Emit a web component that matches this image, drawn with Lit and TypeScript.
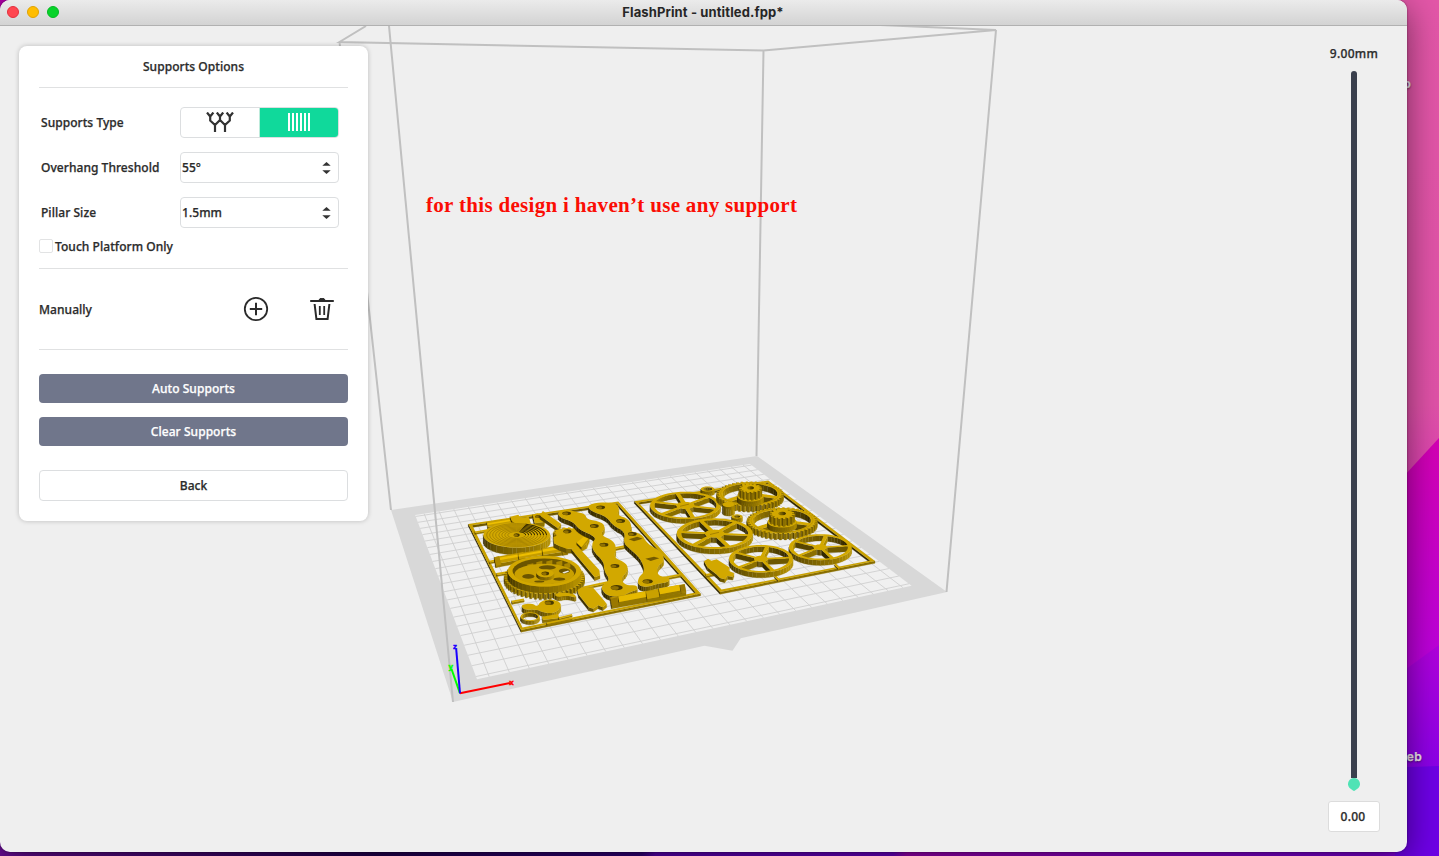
import { LitElement, html, svg, css } from "lit";
import { customElement, property } from "lit/decorators.js";

type Pt = [number, number];

/* ---------- shading and extrusion helpers ---------- */

const TOP = "#d2a800";
const tone = (k: number) =>
  `rgb(${Math.round(212 * k)},${Math.round(170 * k)},0)`;
const path = (pts: Pt[]) =>
  "M" + pts.map(([x, y]) => `${x.toFixed(1)} ${y.toFixed(1)}`).join("L") + "Z";

const area = (pts: Pt[]) =>
  pts.reduce((s, [x, y], i) => {
    const [a, b] = pts[(i + 1) % pts.length];
    return s + x * b - a * y;
  }, 0);

/** Reads "x,y x,y" pairs given on a 3x sheet whose origin is (ox, oy). */
const sheet = (ox: number, oy: number) => (s: string): Pt[] =>
  s.trim().split(/\s+/).map((p) => {
    const [x, y] = p.split(",").map(Number);
    return [ox + x / 3, oy + y / 3] as Pt;
  });
const A = sheet(400, 500);
const B = sheet(580, 490);
const C = sheet(620, 450);

const ellipse = (cx: number, cy: number, rx: number, ry: number, n = 40): Pt[] =>
  Array.from({ length: n }, (_, i) => {
    const t = (i / n) * Math.PI * 2;
    return [cx + rx * Math.cos(t), cy + ry * Math.sin(t)] as Pt;
  });

const gearRim = (cx: number, cy: number, rx: number, ry: number, teeth: number, depth: number): Pt[] => {
  const pts: Pt[] = [];
  for (let i = 0; i < teeth; i++) {
    [[0, 0], [0.12, 1], [0.5, 1], [0.62, 0]].forEach(([o, k]) => {
      const t = ((i + o) / teeth) * Math.PI * 2;
      const f = 1 - depth * (1 - k);
      pts.push([cx + rx * f * Math.cos(t), cy + ry * f * Math.sin(t)]);
    });
  }
  return pts;
};

const smooth = (pts: Pt[]): Pt[] => {
  let out = pts;
  for (let k = 0; k < 2; k++) {
    const next: Pt[] = [];
    out.forEach(([x, y], i) => {
      const [a, b] = out[(i + 1) % out.length];
      next.push([x * 0.75 + a * 0.25, y * 0.75 + b * 0.25], [x * 0.25 + a * 0.75, y * 0.25 + b * 0.75]);
    });
    out = next;
  }
  return out;
};

/** A flat slab of the given depth: visible walls first, then its top face. */
const slab = (outer: Pt[], holes: Pt[][], h: number, top = TOP, dim = 0) => {
  const walls: { d: string; f: string; y: number }[] = [];
  const add = (loop: Pt[], hole: boolean) => {
    const sign = (area(loop) > 0 ? 1 : -1) * (hole ? -1 : 1);
    loop.forEach(([x, y], i) => {
      const [a, b] = loop[(i + 1) % loop.length];
      let nx = (b - y) * sign * 0.42;
      const ny = -(a - x) * sign;
      if (ny <= 0.01) return;
      nx /= Math.hypot(nx, ny * 0.42) || 1;
      const k = Math.max(0.24, Math.min(0.84, (hole ? 0.5 : 0.62) - dim + nx * 0.42));
      walls.push({ d: path([[x, y], [a, b], [a, b + h], [x, y + h]]), f: tone(k), y: (y + b) / 2 });
    });
  };
  holes.forEach((l) => add(l, true));
  add(outer, false);
  walls.sort((p, q) => p.y - q.y);
  return svg`${walls.map((w) => svg`<path d=${w.d} fill=${w.f} stroke=${w.f} stroke-width=".3"/>`)}
    <path d=${path(outer) + holes.map(path).join("")} fill=${top} fill-rule="evenodd"/>`;
};

/* ---------- printed parts ---------- */

const wheel = (cx: number, cy: number, rx: number, ry: number, h: number, spokes: number, phase: number, hub = 0.26) => {
  const q = 0.88;
  const holes: Pt[][] = [];
  const gap = 0.1;
  for (let i = 0; i < spokes; i++) {
    const a0 = phase + (i / spokes) * Math.PI * 2;
    const a1 = phase + ((i + 1) / spokes) * Math.PI * 2;
    const pts: Pt[] = [];
    for (let j = 0; j <= 8; j++) {
      const t = a0 + gap * 0.7 + ((a1 - a0 - gap * 1.4) * j) / 8;
      pts.push([cx + rx * q * Math.cos(t), cy + ry * q * Math.sin(t)]);
    }
    for (let j = 4; j >= 0; j--) {
      const t = a0 + gap * 2.4 + ((a1 - a0 - gap * 4.8) * j) / 4;
      pts.push([cx + rx * hub * Math.cos(t), cy + ry * hub * Math.sin(t)]);
    }
    holes.push(pts);
  }
  return slab(ellipse(cx, cy, rx, ry, 48), holes, h);
};

const gearWheel = (cx: number, cy: number, rx: number, ry: number, hx: number, hy: number, hr: number) => {
  const holes: Pt[][] = [];
  for (let i = 0; i < 3; i++) {
    const a0 = 0.35 + (i / 3) * Math.PI * 2;
    const pts: Pt[] = [];
    for (let j = 0; j <= 10; j++) {
      const t = a0 + 0.12 + (1.85 * j) / 10;
      pts.push([cx + rx * 0.82 * Math.cos(t), cy + ry * 0.82 * Math.sin(t)]);
    }
    for (let j = 5; j >= 0; j--) {
      const t = a0 + 0.3 + (1.5 * j) / 5;
      pts.push([cx + rx * 0.36 * Math.cos(t), cy + ry * 0.36 * Math.sin(t)]);
    }
    holes.push(pts);
  }
  return svg`${slab(gearRim(cx, cy, rx, ry, 44, 0.07), holes, 6)}
    <path d=${path(ellipse(cx, cy - 0.3, rx * 0.88, ry * 0.88))} fill="none" stroke="#b08b00" stroke-width=".6"/>
    ${slab(ellipse(hx, hy + 8, hr * 1.15, hr * 0.46), [], 5)}
    ${slab(gearRim(hx, hy, hr, hr * 0.42, 15, 0.2), [ellipse(hx, hy - 0.3, hr * 0.32, hr * 0.15, 14)], 7.5)}`;
};

const bar = (a: Pt, b: Pt, w: number, h: number, top = TOP) => {
  const dx = b[0] - a[0], dy = b[1] - a[1], l = Math.hypot(dx, dy);
  const ox = (-dy / l) * w / 2, oy = (dx / l) * w / 2;
  return slab([[a[0] + ox, a[1] + oy], [b[0] + ox, b[1] + oy], [b[0] - ox, b[1] - oy], [a[0] - ox, a[1] - oy]], [], h, top);
};

const rod = (pts: string) => {
  const [a, b, t] = A(pts);
  const w = t[1] - 500;
  const off = (k: number): Pt[] => [[a[0], a[1] + k], [b[0], b[1] + k]];
  return svg`${bar(a, b, w, w * 0.5, "#c49c00")}
    <path d=${"M" + off(-w * 0.12).map((p) => p.join(" ")).join("L")} stroke="#eebf00" stroke-width=${w * 0.36}/>`;
};

const frame = (outer: Pt[], inner: Pt[]) => slab(outer, [inner], 2.2, "#c9a100", 0.05);
const hole = (p: Pt, rx = 4.4, ry = 1.9) => svg`
  <ellipse cx=${p[0]} cy=${p[1]} rx=${rx} ry=${ry} fill="#4a3a00"/>
  <ellipse cx=${p[0] - rx * 0.3} cy=${p[1] + 0.3} rx=${rx * 0.65} ry=${ry * 0.75} fill="#8f7000"/>`;

const leftTray = () => {
  const [sc] = A("350,105");
  const [gc] = A("433,222");
  return svg`
    ${frame(
      [[468.3, 524], [618.3, 501.4], [700.7, 593.5], [521, 630]],
      [[472.2, 525.2], [616.8, 503.4], [695.6, 592.4], [522.5, 627.4]]
    )}
    ${bar(A("225,97")[0], A("262,90")[0], 1.6, 1.4)}
    ${bar(A("268,185")[0], A("300,178")[0], 1.8, 1.6)}
    ${bar(A("290,222")[0], A("330,215")[0], 1.8, 1.6)}
    ${bar(A("335,305")[0], A("372,298")[0], 2, 1.8)}
    ${bar(A("640,145")[0], A("685,136")[0], 2, 1.8)}
    ${bar(A("550,262")[0], A("640,243")[0], 1.8, 1.6)}
    ${bar(A("740,243")[0], A("842,224")[0], 1.8, 1.6)}
    ${rod("262,74 345,60 0,14")}
    ${slab(A("330,50 355,44 362,54 386,50 392,70 360,78 336,64"), [], 2.4)}
    ${slab(A("398,44 412,40 436,48 432,66 404,70"), [], 4.5)}
    ${bar(A("424,40")[0], A("478,78")[0], 5.5, 3.6)}
    ${hole(A("414,50")[0], 3, 1.4)}

    ${slab(ellipse(sc[0], sc[1], 33.4, 12.6, 48), [], 7.4)}
    ${[30, 27, 24, 21, 18, 15, 12, 9].map((r) => svg`
      <ellipse cx=${sc[0]} cy=${sc[1]} rx=${r} ry=${r * 0.38} fill="none" stroke="#9a7800" stroke-width=".7"/>
      <path d=${`M${sc[0] + r * 0.3} ${sc[1] - r * 0.36}A${r} ${r * 0.38} 0 0 1 ${sc[0] + r} ${sc[1]}`} fill="none" stroke="#3a2e00" stroke-width="1"/>`)}
    ${hole(sc, 3, 1.8)}

    ${rod("285,182 372,166 0,21")}
    ${rod("356,169 430,156 0,17")}
    ${rod("428,155 502,143 0,21")}
    ${slab(A("283,172 298,168 304,194 288,198"), [], 1.6, "#b08b00")}
    ${slab(A("484,141 498,138 502,158 488,161"), [], 1.6, "#b08b00")}

    ${slab(gearRim(gc[0], gc[1] + 2.6, 40.2, 17.6, 50, 0.08), [], 5.6)}
    ${slab(ellipse(gc[0], gc[1] - 2.8, 36.6, 15.4, 48), [], 6.5)}
    <ellipse cx=${gc[0]} cy=${gc[1] - 3} rx="31.8" ry="12.6" fill="#6b5400"/>
    ${[[-25, -5.4], [-17, -9.4], [-8, -11.8], [2, -12.6], [12, -12], [20, -10]].map(([x, y]) => svg`
      <path d=${`M${gc[0] + x} ${gc[1] + y}l6 -1.4v5l-6 1.4z`} fill="#ab8700"/>`)}
    <ellipse cx=${gc[0]} cy=${gc[1]} rx="29.8" ry="10.2" fill="#c9a000"/>
    ${[[-16, 2.4, 6, 2.3], [3, -6.6, 8.5, 2.1], [20, -3, 5.5, 2.4], [15, 5.2, 6, 1.6], [-5, 7.6, 5, 1]].map(([x, y, a, b]) => svg`
      <ellipse cx=${gc[0] + x} cy=${gc[1] + y} rx=${a} ry=${b} fill="#6b5400"/>`)}
    <path d=${`M${gc[0] + 18} ${gc[1] - 1.8}l6 -1.6l.6 1.2l-5 1.6z`} fill="#e8e6de"/>
    ${slab(ellipse(gc[0] + 1, gc[1] - 0.6, 8.5, 3.8), [], 3)}
    ${hole([gc[0] + 1, gc[1] - 0.6], 3.8, 1.9)}

    ${slab(gearRim(...A("503,98")[0], 14.5, 5.4, 16, 0.14), [], 5)}
    ${slab(A("460,112 486,100 540,98 556,106 568,112 560,132 540,144 522,146 500,146 478,138 462,130"), [], 4.5)}
    ${slab(A("514,148 534,140 598,210 600,226 584,232"), [], 3.4)}
    ${slab(A("530,128 558,104 568,112 544,142"), [], 2.2, "#e8bb00")}
    ${hole(A("502,94")[0], 4, 2)}

    ${slab(smooth(A("472,36 500,28 530,36 556,42 560,58 606,66 616,84 600,104 640,122 650,146 640,172 680,190 684,212 662,236 676,256 712,256 712,270 690,276 664,290 622,288 604,268 608,254 630,240 612,212 612,186 578,152 576,128 590,112 536,88 520,66 478,52")), [], 4.6, TOP, 0.14)}
    ${hole(A("500,40")[0])}${hole(A("583,78")[0])}${hole(A("612,134")[0])}${hole(A("645,198")[0])}${hole(A("650,263")[0], 6, 2.6)}

    ${slab(smooth(B("22,46 58,36 112,40 118,60 110,74 148,88 156,116 146,122 186,132 200,160 246,186 254,212 230,232 234,258 268,262 268,276 230,282 200,292 174,286 174,264 196,242 180,204 150,178 130,158 136,126 98,106 80,80 30,62")), [], 4.6, TOP, 0.14)}
    ${hole(B("62,52")[0])}${hole(B("122,93")[0])}${hole(B("157,132")[0])}${hole(B("203,274")[0], 5, 2.2)}
    <path d=${path(B("146,148 172,140 188,146 162,154"))} fill="#755b00"/>
    <path d=${path(B("196,206 222,200 238,205 212,213"))} fill="#755b00"/>

    ${bar(B("92,334")[0], B("316,294")[0], 8, 3.5, "#b89200")}
    ${bar(B("116,328")[0], B("200,312")[0], 5.5, 3.5, "#e6b900")}
    ${bar(B("200,316")[0], B("256,306")[0], 7.5, 3, "#caa100")}
    ${bar(B("238,304")[0], B("300,293")[0], 6, 3, "#e6b900")}
    ${slab(B("92,326 112,322 116,346 96,350"), [], 1.5, "#9a7800")}
    ${slab(B("300,286 314,283 318,302 304,306"), [], 1.5, "#9a7800")}

    ${slab(A("532,270 546,262 578,262 614,304 620,312 608,322 594,316 580,326 566,322 536,284"), [], 3.4)}
    ${slab(smooth(A("462,284 482,276 524,282 530,294 500,286 474,292")), [], 4)}
    ${slab(smooth(A("362,314 396,310 412,320 422,304 450,296 482,306 482,324 462,340 430,338 410,328 372,330")), [], 4.5)}
    ${hole(A("448,308")[0], 4.6, 2.2)}
    ${slab(ellipse(...A("390,350")[0], 9.4, 4.4), [ellipse(...A("390,350")[0], 8, 3.6, 24)], 3.6)}
    ${slab(A("426,350 474,342 478,354 428,360"), [], 3)}
    ${bar(A("476,354")[0], A("516,344")[0], 1.6, 1.6)}
    ${bar(A("440,370")[0], A("516,354")[0], 1.6, 1.4)}`;
};

const rightTray = () => svg`
  ${frame(
    [[634.3, 501.2], [768.3, 480.4], [875, 561], [720, 592]],
    [[638.2, 502.4], [767.4, 482.4], [870, 560.4], [721.5, 589.6]]
  )}
  ${bar([706, 575], [714, 573.4], 1.8, 1.6)}
  ${bar([775, 576], [779, 580], 2, 1.2)}
  ${bar([835, 564], [839, 568], 2, 1.2)}
  ${slab(ellipse(707.6, 489, 6.8, 2.6, 20), [ellipse(707.6, 489, 4.6, 1.7, 16)], 4.5)}
  ${wheel(685.3, 505.4, 35.3, 13.7, 4.6, 6, 0.28)}
  ${gearWheel(750, 493.8, 33.4, 12.4, 750.4, 488.2, 11.4)}
  ${slab(ellipse(728.5, 504.5, 6, 2.6, 20), [], 9)}
  ${slab(ellipse(737, 516.5, 5.4, 2.2, 20), [ellipse(737, 516.5, 3.2, 1.2, 14)], 4.5)}
  ${gearWheel(782, 520.6, 35.2, 13.4, 782, 513.8, 12.6)}
  ${wheel(714.7, 533.6, 38, 15.3, 5.2, 6, 0.12)}
  ${wheel(820.3, 547.2, 31.4, 13, 5.2, 5, -0.12, 0.22)}
  ${wheel(761, 558.8, 32, 13.8, 5.2, 5, -0.1, 0.22)}
  <path d="M680 506.3l9 -2.2M710 534.5l9 -2.2" stroke="#a07d00" stroke-width=".9"/>
  ${slab(C("252,334 264,326 274,332 290,328 328,352 326,362 342,370 338,380 322,378 314,388 300,384 288,372 262,352"), [], 3.4)}`;

/* ---------- build plate ---------- */

const FL: Pt = [477, 679.3], FR: Pt = [911.6, 585.7], BL: Pt = [415.1, 515], BR: Pt = [750, 464];
const COLS = 25.2, ROWS = 20.5;

const project = (u: number, v: number): Pt => {
  const g = 0.1874, h = 0.3881;
  const a = FR[0] - FL[0] + g * FR[0], b = BL[0] - FL[0] + h * BL[0];
  const d = FR[1] - FL[1] + g * FR[1], e = BL[1] - FL[1] + h * BL[1];
  const w = 1 + g * u + h * v;
  return [(a * u + b * v + FL[0]) / w, (d * u + e * v + FL[1]) / w];
};

const gridPath = () => {
  let d = "";
  for (let i = 0.6; i < COLS; i++) d += `M${project(i / COLS, 0).join(" ")}L${project(i / COLS, 1).join(" ")}`;
  for (let j = 0.25; j < ROWS; j++) d += `M${project(0, j / ROWS).join(" ")}L${project(1, j / ROWS).join(" ")}`;
  return d;
};

@customElement("build-scene")
export class BuildScene extends LitElement {
  static styles = css`
    :host { display: block; overflow: hidden; }
    .stage { display: block; }
    .note { font: bold 21px "Liberation Serif", serif; fill: #fb0d04; }
    .axis { font: bold 8px "Liberation Sans", sans-serif; stroke-width: 0.5; }
  `;

  render() {
    return html`<svg class="stage" width="1407" height="826" viewBox="0 26 1407 826" fill="none">
      <path d="M391 510L757 456L947 592L740.7 638.3L732.5 650.7L704.5 645.7L453 702Z" fill="#d8d8d8"/>
      <path d=${path([FL, FR, BR, BL])} fill="#f0f0f0"/>
      <path d=${gridPath()} stroke="#cfcfcf" stroke-width=".9"/>
      <path d="M366 26L339.5 42L763.5 50.5L996 30L880 25M339.5 42L391 510M763.5 50.5L756.5 456M996 30L946.5 592" stroke="#c0c0c0" stroke-width="2"/>
      ${leftTray()}
      ${rightTray()}
      <path d="M389 26L453 702" stroke="#c0c0c0" stroke-width="2"/>
      <path d="M460 693.3L451.5 669" stroke="#0f0" stroke-width="2"/>
      <path d="M460 693.3L510 683" stroke="#f00" stroke-width="2"/>
      <path d="M460 693.3L456.2 649" stroke="#1a00ff" stroke-width="2"/>
      <text class="axis" x="509.3" y="684.8" fill="#f00" stroke="#f00">x</text>
      <text class="axis" x="453" y="648.6" fill="#1a00ff" stroke="#1a00ff">z</text>
      <text class="axis" x="448.4" y="669" fill="#0f0" stroke="#0f0">y</text>
      <text class="note" x="426" y="211.5" textLength="371">for this design i haven’t use any support</text>
    </svg>`;
  }
}

@customElement("spin-field")
export class SpinField extends LitElement {
  @property() value = "";
  static styles = css`
    :host {
      display: flex; align-items: center; justify-content: space-between;
      box-sizing: border-box; width: 159px; height: 31px; padding: 0 7px 0 1px;
      border: 1px solid #dcdee0; border-radius: 4px; background: #fff;
    }
  `;
  render() {
    return html`<span>${this.value}</span>
      <svg width="9" height="14" viewBox="0 0 9 14" fill="#333"><path d="M.3 4.8L4.5 1L8.7 4.8Z"/><path d="M.3 9.2L4.5 13L8.7 9.2Z"/></svg>`;
  }
}

@customElement("supports-panel")
export class SupportsPanel extends LitElement {
  static styles = css`
    :host {
      display: flex; flex-direction: column; box-sizing: border-box;
      width: 349px; height: 475px; padding: 0 20px;
      background: #fff; border-radius: 8px; box-shadow: 0 0 5px rgba(0, 0, 0, 0.22);
    }
    .title { height: 41px; line-height: 41px; text-align: center; }
    .rule { height: 1px; background: #e0e1e2; }
    .fields { display: flex; flex-direction: column; gap: 14px; padding: 19px 9px 0 2px; }
    .field { display: flex; align-items: center; justify-content: space-between; height: 31px; }
    .kinds { display: flex; box-sizing: border-box; width: 159px; height: 31px; border: 1px solid #dcdee0; border-radius: 4px; overflow: hidden; }
    .kind { box-sizing: border-box; width: 78px; padding: 0 1px 1px 0; display: flex; align-items: center; justify-content: center; }
    .kind.on { width: 79px; background: #10d99b; border-left: 1px solid #bdebdb; }
    .check { display: flex; align-items: center; gap: 2px; height: 14px; margin: 11px 0 15px; }
    .box { box-sizing: border-box; width: 14px; height: 14px; border: 1px solid #e2e3e4; border-radius: 2px; }
    .manual { display: flex; align-items: center; height: 80px; }
    .manual .label { flex: 1; }
    .tools { display: flex; align-items: center; gap: 41px; padding-right: 14px; }
    .button { display: flex; align-items: center; justify-content: center; height: 29px; border-radius: 4px; background: #70768b; color: #fff; }
    .auto { margin-top: 24px; }
    .clear { margin-top: 14px; }
    .back { box-sizing: border-box; height: 31px; margin-top: 24px; background: #fff; border: 1px solid #dcdee0; color: #2b2b2b; }
  `;
  render() {
    return html`
      <div class="title">Supports Options</div>
      <div class="rule"></div>
      <div class="fields">
        <div class="field">
          <span>Supports Type</span>
          <div class="kinds">
            <div class="kind">
              <svg width="28" height="20" viewBox="0 0 28 20" fill="none" stroke="#333" stroke-width="2.2">
                <path d="M1 .5L4.2 4.5L7.4 .5M4.2 4.5V8.5L9 13L14 8V4.5L10.8 .5M14 4.5L17.2 .5M14 8L19 13L23.8 8.5V4.5L20.6 .5M23.8 4.5L27 .5M9 13V20M19 13V20"/>
              </svg>
            </div>
            <div class="kind on">
              <svg width="22" height="18" viewBox="0 0 22 18" fill="#fff">
                ${[0, 4, 8, 12, 16, 20].map((x) => svg`<rect x=${x} y="0" width="2" height="18"/>`)}
              </svg>
            </div>
          </div>
        </div>
        <div class="field"><span>Overhang Threshold</span><spin-field value="55°"></spin-field></div>
        <div class="field"><span>Pillar Size</span><spin-field value="1.5mm"></spin-field></div>
      </div>
      <div class="check"><span class="box"></span><span>Touch Platform Only</span></div>
      <div class="rule"></div>
      <div class="manual">
        <span class="label">Manually</span>
        <div class="tools">
          <svg width="26" height="26" viewBox="0 0 26 26" fill="none" stroke="#2b2b2b" stroke-width="1.8">
            <circle cx="13" cy="13" r="11.2"/><path d="M13 6.8V19.2M6.8 13H19.2" stroke-width="2"/>
          </svg>
          <svg width="24" height="24" viewBox="0 0 24 24" fill="none" stroke="#2b2b2b" stroke-width="2">
            <path d="M.2 4H23.8"/><path d="M9 3L10 1.6H14L15 3Z" fill="#2b2b2b" stroke-width="1"/>
            <path d="M4.6 7L6.4 22H17.6L19.4 7"/><path d="M9.8 9V18M14.2 9V18" stroke-width="1.8"/>
          </svg>
        </div>
      </div>
      <div class="rule"></div>
      <div class="button auto">Auto Supports</div>
      <div class="button clear">Clear Supports</div>
      <div class="button back">Back</div>
    `;
  }
}

@customElement("layer-slider")
export class LayerSlider extends LitElement {
  static styles = css`
    :host { display: flex; flex-direction: column; align-items: center; width: 52px; letter-spacing: 0.3px; }
    .max { height: 20px; line-height: 20px; white-space: nowrap; }
    .track { display: flex; flex-direction: column; align-items: center; justify-content: flex-end; width: 6px; height: 720px; margin-top: 7px; }
    .line { flex: 1; width: 6px; border-radius: 3px 3px 0 0; background: #3a404d; }
    .knob { display: block; flex: none; }
    .value { box-sizing: border-box; width: 52px; height: 31px; line-height: 29px; margin-top: 10px; padding-right: 2px; text-align: center; background: #fff; border: 1px solid #dcdcdc; border-radius: 3px; }
  `;
  render() {
    return html`<div class="max">9.00mm</div>
      <div class="track"><div class="line"></div>
        <svg class="knob" width="12" height="13" viewBox="0 0 12 13" fill="#4fe3b5"><path d="M6 0a6 6 0 0 1 4.4 10L7 12.6Q6 13.3 5 12.6L1.6 10A6 6 0 0 1 6 0Z"/></svg>
      </div>
      <div class="value">0.00</div>`;
  }
}

@customElement("app-root")
export class AppRoot extends LitElement {
  static styles = css`
    :host {
      display: block; position: relative; width: 1439px; height: 856px; overflow: hidden;
      font: 500 12px "Noto Sans", sans-serif; letter-spacing: 0.05px; color: #2b2b2b;
      -webkit-text-stroke: 0.25px; background: #b000a8;
    }
    .wallpaper { position: absolute; inset: 0; }
    .shortcut { position: absolute; color: #f3e6f2; font: 600 12px Inter, sans-serif; letter-spacing: 0.3px; text-shadow: 0 1px 2px rgba(0, 0, 0, 0.6); }
    .first { right: 28px; top: 76px; }
    .second { right: 17px; top: 749px; }
    .window { position: relative; width: 1407px; height: 852px; border-radius: 10px; overflow: hidden; background: #efefef; }
    .shade { position: absolute; left: 0; top: 0; width: 1407px; height: 852px; border-radius: 10px; box-shadow: 0 8px 34px rgba(0, 0, 0, 0.5), 0 0 2px rgba(0, 0, 0, 0.5); }
    .bar { display: grid; grid-template-columns: 60px 1fr 66px; align-items: center; box-sizing: border-box; height: 26px; padding: 0 2px 2px 7px; border-bottom: 1px solid #b1b1b1; background: linear-gradient(#ebebeb, #d3d3d3); }
    .lights { display: flex; gap: 8px; }
    .light { box-sizing: border-box; width: 12px; height: 12px; border-radius: 50%; background: #ff4650; border: 1px solid #e2303d; }
    .light.min { background: #ffbd00; border-color: #e0a200; }
    .light.max { background: #07d32a; border-color: #05b822; }
    .caption { text-align: center; font: 700 13px Inter, sans-serif; letter-spacing: 0.12px; -webkit-text-stroke: 0; color: #262626; }
    .body { display: grid; grid-template-columns: 1fr auto; height: 826px; }
    .scene { grid-area: 1 / 1 / 2 / 3; -webkit-text-stroke: 0; }
    .panel { grid-area: 1 / 1; margin: 20px 0 0 19px; z-index: 1; }
    .slider { grid-area: 1 / 2; margin: 18px 27px 0 0; z-index: 1; }
  `;
  render() {
    return html`
      <svg class="wallpaper" width="1439" height="856" viewBox="0 0 1439 856">
        <defs>
          <linearGradient id="a" x1="0" y1="0" x2="0" y2="1"><stop offset="0" stop-color="#e357a8"/><stop offset=".8" stop-color="#e052a8"/><stop offset="1" stop-color="#dc3cb4"/></linearGradient>
          <linearGradient id="b" x1="0" y1="0" x2="0" y2="1"><stop offset="0" stop-color="#d400b4"/><stop offset="1" stop-color="#b800e0"/></linearGradient>
          <linearGradient id="c" x1="0" y1="0" x2="0" y2="1"><stop offset="0" stop-color="#b000dc"/><stop offset="1" stop-color="#8a00e8"/></linearGradient>
          <linearGradient id="d" x1="0" y1="0" x2="1" y2="0"><stop offset="0" stop-color="#6a0c98"/><stop offset=".27" stop-color="#220050"/><stop offset=".46" stop-color="#32007c"/><stop offset=".47" stop-color="#5a00b4"/><stop offset=".64" stop-color="#6a00c8"/><stop offset=".65" stop-color="#9c00b4"/><stop offset=".92" stop-color="#8000d8"/></linearGradient>
        </defs>
        <path d="M1380 0H1439V440L1380 505Z" fill="url(#a)"/>
        <path d="M1439 438V648L1380 688V502Z" fill="url(#b)"/>
        <path d="M1439 645V768L1380 770V688Z" fill="url(#c)"/>
        <path d="M1439 766V856H1380V768Z" fill="#6e00e6"/>
        <path d="M0 840H1395V856H0Z" fill="url(#d)"/>
      </svg>
      <div class="shortcut first">o</div>
      <div class="shortcut second">eb</div>
      <div class="shade"></div>
      <div class="window">
        <div class="bar">
          <div class="lights"><span class="light"></span><span class="light min"></span><span class="light max"></span></div>
          <div class="caption">FlashPrint - untitled.fpp*</div>
        </div>
        <div class="body">
          <build-scene class="scene"></build-scene>
          <supports-panel class="panel"></supports-panel>
          <layer-slider class="slider"></layer-slider>
        </div>
      </div>`;
  }
}
